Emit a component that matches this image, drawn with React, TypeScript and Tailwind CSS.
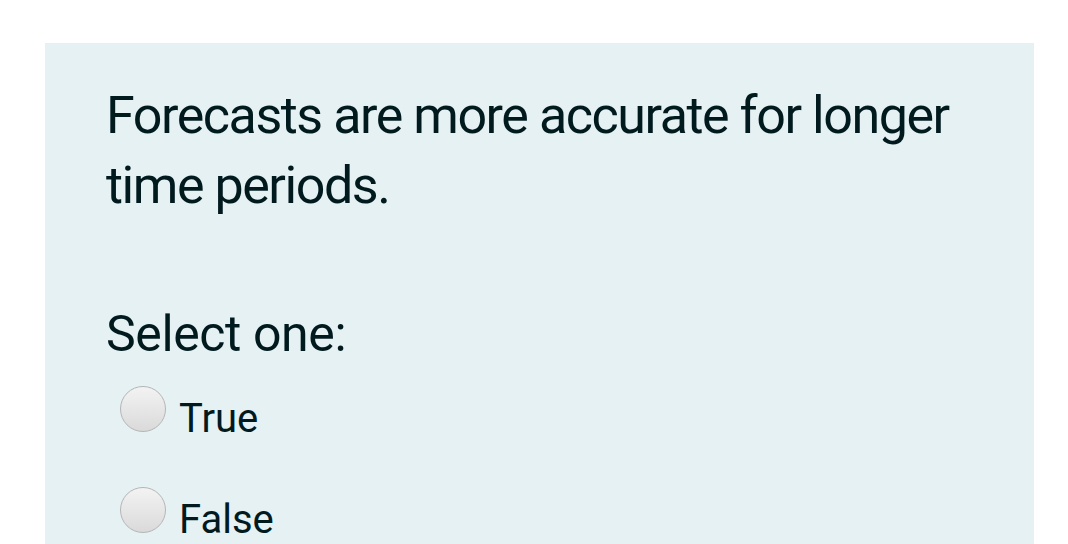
export default function App() {
  return (
    <div className="w-[1068px] h-[544px] bg-white overflow-hidden pt-[43px] pl-[45px]" style={{ fontFamily: "Roboto, sans-serif" }}>
      <div className="w-[989px] h-[520px] bg-[#e6f1f4] pl-[61px] pt-[38px] text-[#001a1e]">
        <div className="text-[52px] leading-[70px] tracking-[-1.45px] w-[880px]">
          Forecasts are more accurate for longer time periods.
        </div>
        <div className="text-[50px] leading-[60px] tracking-[-0.4px] mt-[83px]">Select one:</div>
        <div className="flex flex-col gap-[44px] mt-[22px]">
          {["True", "False"].map((t) => (
            <label key={t} className="flex items-start">
              <span className="ml-[14px] w-[46px] h-[46px] shrink-0 rounded-full border border-[#b5b5b5] bg-gradient-to-b from-[#f3f3f3] to-[#dadada]" />
              <span className="ml-[13px] mt-[9px] text-[40px] leading-[48px]">{t}</span>
            </label>
          ))}
        </div>
      </div>
    </div>
  );
}
